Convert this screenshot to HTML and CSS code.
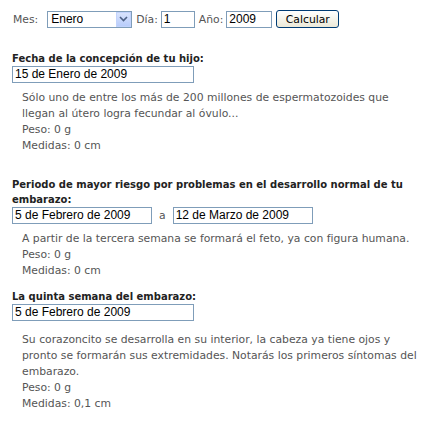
FILE: index.html
```html
<!DOCTYPE html>
<html lang="es">
<head>
    <meta charset="UTF-8">
    <title>Calculadora de embarazo</title>
    <link rel="stylesheet" href="styles.css">
</head>
<body>
    <div class="form-row">
        <label class="mes-label">Mes:</label>
        <div class="select">
            <span>Enero</span>
            <span class="select-arrow">
                <svg width="9" height="6" viewBox="0 0 9 6"><path d="M1 1 L4.5 4.5 L8 1" fill="none" stroke="#4d6185" stroke-width="1.6"/></svg>
            </span>
        </div>
        <label>Día:</label>
        <div class="field day">1</div>
        <label>Año:</label>
        <div class="field year">2009</div>
        <button class="calc-button">Calcular</button>
    </div>

    <!-- Concepcion -->
    <h3>Fecha de la concepción de tu hijo:</h3>
    <div class="field date">15 de Enero de 2009</div>
    <div class="info">
        Sólo uno de entre los más de 200 millones de espermatozoides que<br>
        llegan al útero logra fecundar al óvulo...<br>
        Peso: 0 g<br>
        Medidas: 0 cm
    </div>

    <!-- Periodo de riesgo -->
    <h3>Periodo de mayor riesgo por problemas en el desarrollo normal de tu embarazo:</h3>
    <div class="range">
        <div class="field short">5 de Febrero de 2009</div>
        <span>a</span>
        <div class="field short">12 de Marzo de 2009</div>
    </div>
    <div class="info">
        A partir de la tercera semana se formará el feto, ya con figura humana.<br>
        Peso: 0 g<br>
        Medidas: 0 cm
    </div>

    <!-- Quinta semana -->
    <h3 class="close">La quinta semana del embarazo:</h3>
    <div class="field date">5 de Febrero de 2009</div>
    <div class="info spaced">
        Su corazoncito se desarrolla en su interior, la cabeza ya tiene ojos y
        pronto se formarán sus extremidades. Notarás los primeros síntomas del
        embarazo.<br>
        Peso: 0 g<br>
        Medidas: 0,1 cm
    </div>
</body>
</html>
```

FILE: styles.css
```css
* {
    margin: 0;
    padding: 0;
    box-sizing: border-box;
}

body {
    font-family: "DejaVu Sans", Verdana, sans-serif;
    font-size: 10.8px;
    color: #555;
    background-color: #fff;
    padding: 10px 12px;
    width: 440px;
}

.form-row {
    display: flex;
    align-items: center;
}

.form-row label {
    color: #555;
    margin-right: 3px;
}

.mes-label {
    margin-left: 1px;
}

.select {
    display: flex;
    align-items: center;
    justify-content: space-between;
    width: 85px;
    height: 17px;
    margin-left: 6px;
    margin-right: 4px;
    border: 1px solid #7f9db9;
    font-family: "Liberation Sans", Arial, sans-serif;
    font-size: 12px;
    color: #000;
    padding-left: 3px;
}

.select-arrow {
    display: flex;
    align-items: center;
    justify-content: center;
    width: 15px;
    height: 15px;
    background: linear-gradient(#d8e3fd, #b9cdfb);
    border: 1px solid #c2d3fc;
}

.field {
    height: 17px;
    border: 1px solid #7f9db9;
    font-family: "Liberation Sans", Arial, sans-serif;
    font-size: 12px;
    line-height: 15px;
    color: #000;
    padding-left: 2px;
    background-color: #fff;
}

.day {
    width: 34px;
    margin-right: 4px;
}

.year {
    width: 46px;
    margin-right: 4px;
}

.calc-button {
    height: 18px;
    width: 63px;
    font-family: "DejaVu Sans", Verdana, sans-serif;
    font-size: 10.8px;
    color: #000;
    background: linear-gradient(#fff, #ece9d8);
    border: 1px solid #003c74;
    border-radius: 3px;
}

h3 {
    font-size: 10px;
    font-weight: bold;
    color: #222;
    line-height: 15px;
    margin-top: 23px;
}

h3.close {
    margin-top: 10px;
}

.date {
    width: 182px;
}

.range {
    display: flex;
    align-items: center;
    gap: 7px;
}

.short {
    width: 140px;
}

.info {
    line-height: 16px;
    margin: 7px 0 0 10px;
}

.info.spaced {
    margin-top: 11px;
}
```
